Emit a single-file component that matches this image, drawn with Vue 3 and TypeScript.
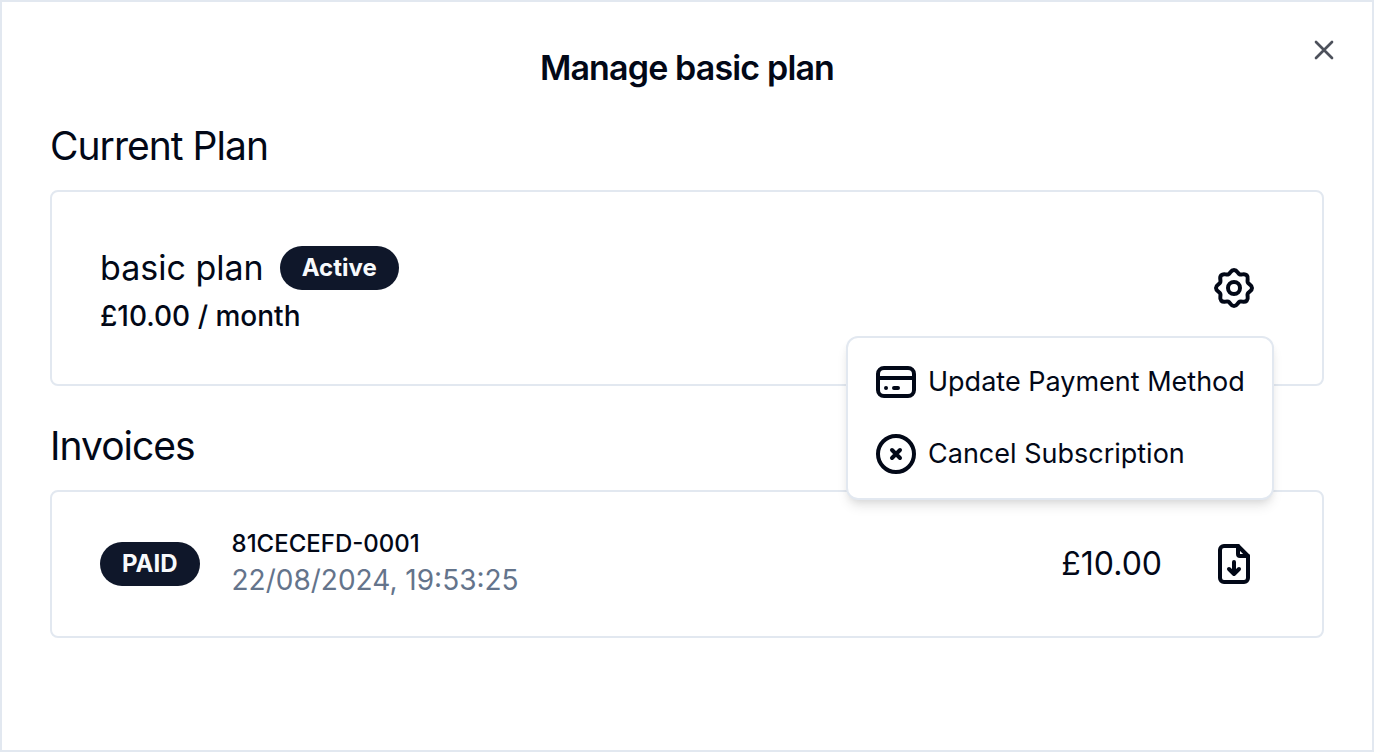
<script setup lang="ts">
import { ref } from 'vue'

interface Invoice {
  id: string
  status: string
  date: string
  amount: string
}

const menuOpen = ref(true)
const invoices: Invoice[] = [
  { id: '81CECEFD-0001', status: 'PAID', date: '22/08/2024, 19:53:25', amount: '£10.00' },
]

// Closed wavy outline with eight lobes, alternating between tips and valleys.
function gearPath(): string {
  const nodes = Array.from({ length: 16 }, (_, i) => {
    const angle = (i * Math.PI) / 8 - Math.PI / 2
    const radius = i % 2 ? 7.4 : 9
    const handle = i % 2 ? 1.2 : 1.7
    const x = 12 + radius * Math.cos(angle)
    const y = 12 + radius * Math.sin(angle)
    return { x, y, dx: -Math.sin(angle) * handle, dy: Math.cos(angle) * handle }
  })
  const n = (v: number) => v.toFixed(2)
  let d = `M${n(nodes[0].x)} ${n(nodes[0].y)}`
  nodes.forEach((a, i) => {
    const b = nodes[(i + 1) % nodes.length]
    d += `C${n(a.x + a.dx)} ${n(a.y + a.dy)} ${n(b.x - b.dx)} ${n(b.y - b.dy)} ${n(b.x)} ${n(b.y)}`
  })
  return d + 'Z'
}
const gear = gearPath()
</script>

<template>
  <main class="dialog" role="dialog" aria-labelledby="dialog-title">
    <button class="close" type="button" aria-label="Close">
      <svg class="close-icon" viewBox="0 0 24 24"><path d="M18 6 6 18M6 6l12 12" /></svg>
    </button>
    <h1 id="dialog-title" class="title">Manage basic plan</h1>

    <section class="section">
      <h2 class="heading">Current Plan</h2>
      <div class="card plan">
        <div>
          <div class="plan-head">
            <span class="plan-name">basic plan</span>
            <span class="badge">Active</span>
          </div>
          <p class="plan-price">£10.00 / month</p>
        </div>
        <div class="menu-anchor">
          <button
            class="icon-button"
            type="button"
            aria-label="Plan settings"
            aria-haspopup="menu"
            :aria-expanded="menuOpen"
            @click="menuOpen = !menuOpen"
          >
            <svg class="icon" viewBox="0 0 24 24">
              <path :d="gear" />
              <circle cx="12" cy="12" r="3" />
            </svg>
          </button>
          <div v-if="menuOpen" class="menu" role="menu">
            <button class="menu-item" type="button" role="menuitem">
              <svg class="icon" viewBox="0 0 24 24">
                <rect x="3" y="5" width="18" height="14" rx="3" />
                <path d="M3 10h18M7 15h.01M11 15h2" />
              </svg>
              <span>Update Payment Method</span>
            </button>
            <button class="menu-item" type="button" role="menuitem">
              <svg class="icon" viewBox="0 0 24 24">
                <circle cx="12" cy="12" r="9" />
                <path d="m10 10 4 4m0-4-4 4" />
              </svg>
              <span>Cancel Subscription</span>
            </button>
          </div>
        </div>
      </div>
    </section>

    <section class="section">
      <h2 class="heading">Invoices</h2>
      <div v-for="invoice in invoices" :key="invoice.id" class="card invoice">
        <span class="badge">{{ invoice.status }}</span>
        <div class="invoice-info">
          <p class="invoice-id">{{ invoice.id }}</p>
          <p class="invoice-date">{{ invoice.date }}</p>
        </div>
        <span class="amount">{{ invoice.amount }}</span>
        <button class="icon-button" type="button" aria-label="Download invoice">
          <svg class="icon" viewBox="0 0 24 24">
            <path d="M14 3H7a2 2 0 0 0-2 2v14a2 2 0 0 0 2 2h10a2 2 0 0 0 2-2V8z" />
            <path d="M14 3v4a1 1 0 0 0 1 1h4M12 11v6M9.5 14.5 12 17l2.5-2.5" />
          </svg>
        </button>
      </div>
    </section>
  </main>
</template>

<style>
body {
  margin: 0;
  background: #fff;
}
</style>

<style scoped>
.dialog,
.dialog * {
  box-sizing: border-box;
}
.dialog {
  position: relative;
  display: flex;
  flex-direction: column;
  gap: 32px;
  min-height: 100vh;
  padding: 48px;
  border: 2px solid #e2e8f0;
  background: #fff;
  color: #020817;
  font-family: Inter, "Liberation Sans", sans-serif;
}
h1,
h2,
p {
  margin: 0;
}
button {
  border: 0;
  background: none;
  color: inherit;
  font: inherit;
  cursor: pointer;
}
.title {
  font-size: 34px;
  font-weight: 600;
  line-height: 36px;
  letter-spacing: -0.025em;
  text-align: center;
}
.close {
  position: absolute;
  top: 32px;
  right: 32px;
  display: flex;
  padding: 0;
  opacity: 0.7;
}
.close-icon {
  width: 32px;
  height: 32px;
}
.icon {
  flex: none;
  width: 48px;
  height: 48px;
}
.icon,
.close-icon {
  fill: none;
  stroke: currentColor;
  stroke-width: 2;
  stroke-linecap: round;
  stroke-linejoin: round;
}
.section {
  display: flex;
  flex-direction: column;
  gap: 16px;
}
.heading {
  font-size: 39px;
  font-weight: 400;
  line-height: 56px;
  letter-spacing: -0.025em;
}
.card {
  display: flex;
  align-items: center;
  border: 2px solid #e2e8f0;
  border-radius: 8px;
}
.plan {
  justify-content: space-between;
  padding: 48px;
}
.plan-head {
  display: flex;
  align-items: center;
  gap: 16px;
}
.plan-name {
  font-size: 34px;
  line-height: 56px;
}
.plan-price {
  font-size: 28px;
  font-weight: 500;
  line-height: 40px;
}
.badge {
  padding: 6px 22px;
  border-radius: 22px;
  background: #0f172a;
  color: #f8fafc;
  font-size: 24px;
  font-weight: 700;
  line-height: 32px;
}
.menu-anchor {
  position: relative;
}
.icon-button {
  display: flex;
  padding: 16px;
}
.menu {
  position: absolute;
  z-index: 1;
  top: calc(100% + 8px);
  right: 0;
  min-width: 428px;
  padding: 8px;
  border: 2px solid #e2e8f0;
  border-radius: 12px;
  background: #fff;
  box-shadow: 0 8px 12px -2px rgb(0 0 0 / 10%), 0 4px 8px -4px rgb(0 0 0 / 10%);
}
.menu-item {
  display: flex;
  align-items: center;
  gap: 8px;
  width: 100%;
  padding: 12px 16px;
  font-size: 27px;
  line-height: 40px;
  white-space: nowrap;
}
.invoice {
  padding: 32px 48px;
}
.invoice-info {
  flex: 1;
  margin-left: 32px;
}
.invoice-id {
  font-size: 24px;
  font-weight: 500;
  line-height: 32px;
}
.invoice-date {
  color: #64748b;
  font-size: 28px;
  line-height: 40px;
}
.amount {
  margin-right: 32px;
  font-size: 32px;
  line-height: 48px;
}
</style>
